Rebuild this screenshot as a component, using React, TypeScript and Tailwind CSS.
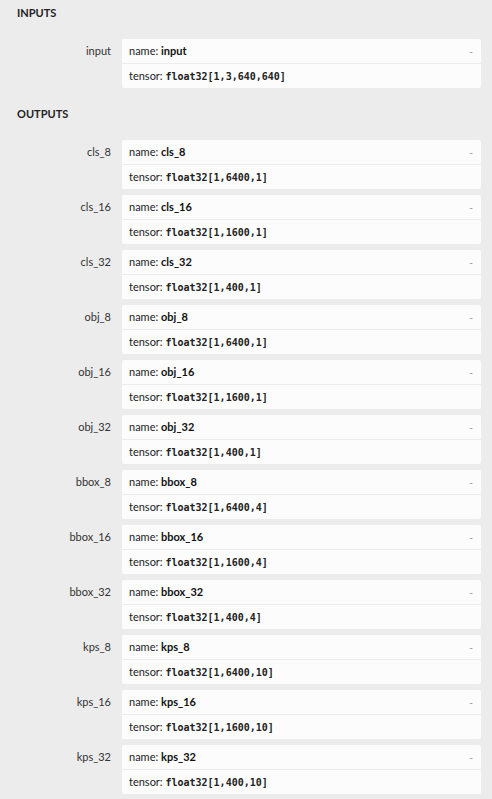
import React from "react";

type Arg = { name: string; tensor: string };

const inputs: Arg[] = [{ name: "input", tensor: "float32[1,3,640,640]" }];

const outputs: Arg[] = [
  { name: "cls_8", tensor: "float32[1,6400,1]" },
  { name: "cls_16", tensor: "float32[1,1600,1]" },
  { name: "cls_32", tensor: "float32[1,400,1]" },
  { name: "obj_8", tensor: "float32[1,6400,1]" },
  { name: "obj_16", tensor: "float32[1,1600,1]" },
  { name: "obj_32", tensor: "float32[1,400,1]" },
  { name: "bbox_8", tensor: "float32[1,6400,4]" },
  { name: "bbox_16", tensor: "float32[1,1600,4]" },
  { name: "bbox_32", tensor: "float32[1,400,4]" },
  { name: "kps_8", tensor: "float32[1,6400,10]" },
  { name: "kps_16", tensor: "float32[1,1600,10]" },
  { name: "kps_32", tensor: "float32[1,400,10]" },
];

function Item({ arg }: { arg: Arg }) {
  return (
    <div className="flex">
      <div className="w-[122px] shrink-0 pr-[11px] text-right text-[#333] leading-[24px]">
        {arg.name}
      </div>
      <div className="flex-1 mr-[11px] rounded-[2px] bg-[#fcfcfc] overflow-hidden">
        <div className="flex items-center h-[25px] pl-[7px] pr-[8px] border-b border-[#ececec]">
          <span className="flex-1 text-[#222]">
            name: <b className="font-bold text-[#111]">{arg.name}</b>
          </span>
          <span className="text-[#888] text-[10px]">-</span>
        </div>
        <div className="flex items-center h-[24px] pl-[7px]">
          <span className="text-[#222]">tensor:&nbsp;</span>
          <code className="font-['DejaVu_Sans_Mono',monospace] text-[10px] font-bold text-[#222]">
            {arg.tensor}
          </code>
        </div>
      </div>
    </div>
  );
}

function Section({ title, items }: { title: string; items: Arg[] }) {
  return (
    <div>
      <div className="pl-[17px] h-4 leading-4 font-bold text-[11px] text-[#222] mb-[18px]">
        {title}
      </div>
      <div className="flex flex-col gap-[6px]">
        {items.map((a) => (
          <Item key={a.name} arg={a} />
        ))}
      </div>
    </div>
  );
}

export default function App() {
  return (
    <div className="w-[492px] h-[799px] bg-[#ececec] overflow-hidden pt-[5px] font-['Lato','Liberation_Sans',sans-serif] text-[11px]">
      <Section title="INPUTS" items={inputs} />
      <div className="h-[18px]" />
      <Section title="OUTPUTS" items={outputs} />
    </div>
  );
}
